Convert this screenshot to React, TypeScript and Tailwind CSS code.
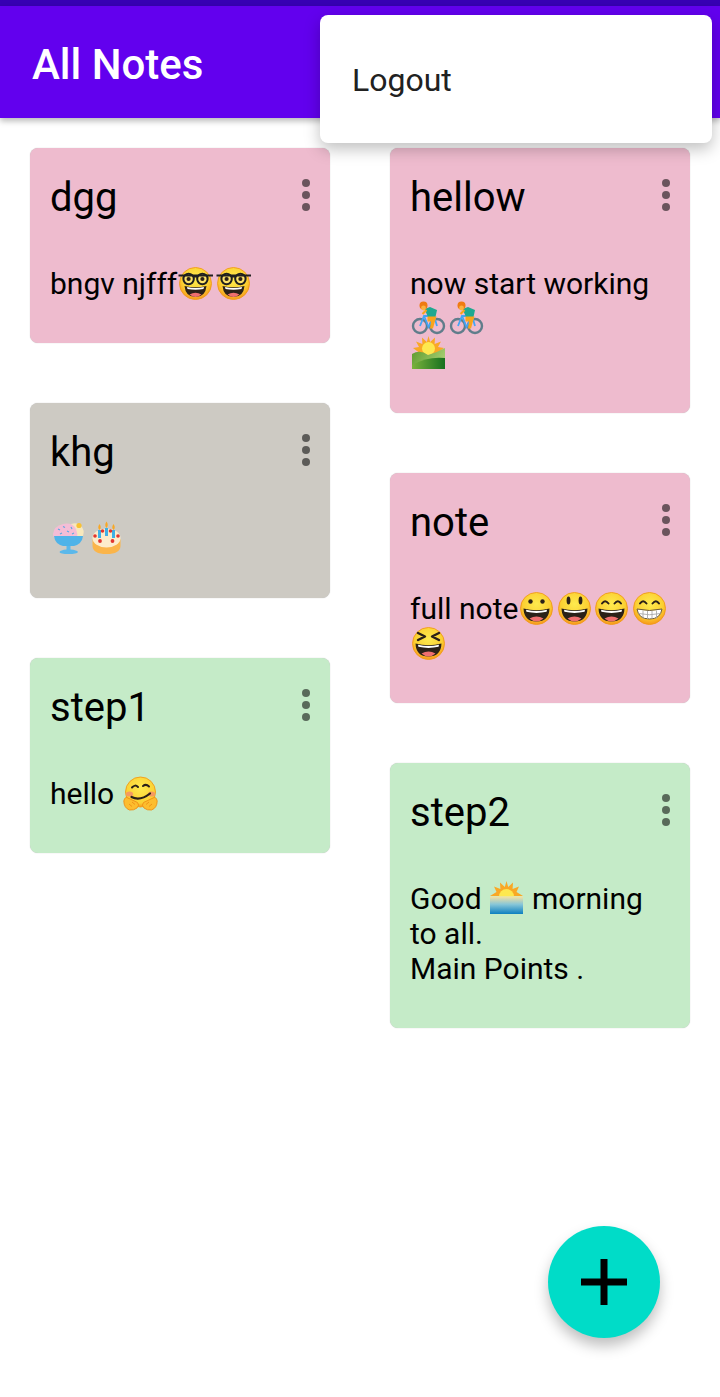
import React from 'react';

const Slot: React.FC<{ label: string; children: React.ReactNode; className?: string }> = ({
  label,
  children,
  className = '',
}) => (
  <svg
    role="img"
    aria-label={label}
    viewBox="0 0 37.5 35"
    className={`inline-block align-top w-[37.5px] h-[35px] ${className}`}
  >
    {children}
  </svg>
);

const Face: React.FC<{ children: React.ReactNode }> = ({ children }) => (
  <>
    <defs>
      <radialGradient id="faceFill" cx="50%" cy="36%" r="64%">
        <stop offset="0%" stopColor="#feea4e" />
        <stop offset="66%" stopColor="#fbd032" />
        <stop offset="100%" stopColor="#f7981c" />
      </radialGradient>
    </defs>
    <circle cx="18.5" cy="17.5" r="16" fill="url(#faceFill)" stroke="#f09a18" strokeWidth="0.9" />
    {children}
  </>
);

const OpenMouth = () => (
  <>
    <path d="M5.5 17.5 Q18.5 21 31.5 17.5 Q31 30.5 18.5 30.5 Q6 30.5 5.5 17.5Z" fill="#2b2118" />
    <path d="M8 18.8 Q18.5 21.4 29 18.8 L28.6 20.8 Q18.5 23 8.4 20.8Z" fill="#fff" />
    <path d="M11.5 27.5 Q18.5 23.5 25.5 27.5 Q22 30.5 18.5 30.5 Q15 30.5 11.5 27.5Z" fill="#ef6f6f" />
  </>
);

const ArcEyes = () => (
  <path
    d="M9 12.5 Q12 8 15.5 12.5 M21.5 12.5 Q25 8 28 12.5"
    fill="none"
    stroke="#2b2118"
    strokeWidth="2"
    strokeLinecap="round"
  />
);

const Nerd = () => (
  <Slot label="nerd face">
    <Face>
      <path d="M7.5 20 Q18.5 22.5 29.5 20 Q28.5 31 18.5 31 Q8.5 31 7.5 20Z" fill="#2b2118" />
      <path d="M10 21 Q18.5 23 27 21 L26.5 23 Q18.5 24.6 10.5 23Z" fill="#fff" />
      <path d="M12.5 28.5 Q18.5 25 24.5 28.5 Q21 31 18.5 31 Q16 31 12.5 28.5Z" fill="#ef6f6f" />
      <circle cx="11.6" cy="13" r="5.2" fill="#fde36a" stroke="#1f1f1f" strokeWidth="2" />
      <circle cx="25.4" cy="13" r="5.2" fill="#fde36a" stroke="#1f1f1f" strokeWidth="2" />
      <circle cx="11.6" cy="13" r="2.1" fill="#2b2118" />
      <circle cx="25.4" cy="13" r="2.1" fill="#2b2118" />
      <path d="M1.5 9.5 H36 M16 10.5 H21" stroke="#1f1f1f" strokeWidth="2" fill="none" />
    </Face>
  </Slot>
);

const Grinning = () => (
  <Slot label="grinning face">
    <Face>
      <circle cx="12.5" cy="10.5" r="2.2" fill="#2b2118" />
      <circle cx="24.5" cy="10.5" r="2.2" fill="#2b2118" />
      <OpenMouth />
    </Face>
  </Slot>
);

const Smiley = () => (
  <Slot label="smiling face with open mouth">
    <Face>
      <ellipse cx="12.5" cy="9.5" rx="1.9" ry="4" fill="#2b2118" />
      <ellipse cx="24.5" cy="9.5" rx="1.9" ry="4" fill="#2b2118" />
      <OpenMouth />
    </Face>
  </Slot>
);

const Smile = () => (
  <Slot label="smiling face with smiling eyes">
    <Face>
      <ArcEyes />
      <OpenMouth />
    </Face>
  </Slot>
);

const Beaming = () => (
  <Slot label="beaming face">
    <Face>
      <ArcEyes />
      <path d="M6 18 Q18.5 21 31 18 Q29.5 28 18.5 28 Q7.5 28 6 18Z" fill="#fff" stroke="#6b5a3c" strokeWidth="1" />
      <path
        d="M7.5 22.5 Q18.5 25 29.5 22.5 M12 19.5 V27.5 M16.5 20 V28 M21 20 V28 M25.5 19.5 V27.5"
        fill="none"
        stroke="#a9a9a9"
        strokeWidth="0.9"
      />
    </Face>
  </Slot>
);

const Squint = () => (
  <Slot label="grinning squinting face">
    <Face>
      <path
        d="M8 7 L15 10.5 L8 14 M29 7 L22 10.5 L29 14"
        fill="none"
        stroke="#2b2118"
        strokeWidth="2.4"
        strokeLinecap="round"
        strokeLinejoin="round"
      />
      <OpenMouth />
    </Face>
  </Slot>
);

const Hugging = () => (
  <Slot label="hugging face">
    <defs>
      <radialGradient id="hugFill" cx="50%" cy="36%" r="64%">
        <stop offset="0%" stopColor="#feea4e" />
        <stop offset="80%" stopColor="#fbd032" />
        <stop offset="100%" stopColor="#f7981c" />
      </radialGradient>
    </defs>
    <circle cx="18.5" cy="16" r="15" fill="url(#hugFill)" stroke="#f09a18" strokeWidth="0.9" />
    <ellipse cx="7.5" cy="18" rx="3.6" ry="2.6" fill="#f59a62" />
    <ellipse cx="29.5" cy="18" rx="3.6" ry="2.6" fill="#f59a62" />
    <path d="M10 11.5 Q13 8 16 11" fill="none" stroke="#2b2118" strokeWidth="2" strokeLinecap="round" />
    <path d="M21 10 Q24 7.5 27 10.5" fill="none" stroke="#2b2118" strokeWidth="2" strokeLinecap="round" />
    <path d="M9.5 21 Q18 25.5 28 17.5" fill="none" stroke="#2b2118" strokeWidth="2.2" strokeLinecap="round" />
    <path
      d="M1.8 25 Q3 20 6 22 L15.5 26.5 Q18 29 15 32 Q12 34.5 7.5 34 Q2 32 1.8 25Z"
      fill="#fdbd2e"
      stroke="#ee8f15"
      strokeWidth="0.9"
    />
    <path
      d="M35.2 25 Q34 20 31 22 L21.5 26.5 Q19 29 22 32 Q25 34.5 29.5 34 Q35 32 35.2 25Z"
      fill="#fdbd2e"
      stroke="#ee8f15"
      strokeWidth="0.9"
    />
    <path d="M10 26 L13 28.5 M7 28 L10 30.5 M27 26 L24 28.5 M30 28 L27 30.5" stroke="#ee8f15" strokeWidth="0.9" />
  </Slot>
);

const Biker = () => (
  <Slot label="person biking">
    <circle cx="10" cy="25" r="7" fill="none" stroke="#607d8b" strokeWidth="2.4" />
    <circle cx="27" cy="25" r="7" fill="none" stroke="#607d8b" strokeWidth="2.4" />
    <path d="M10 25 L14 15 H24 L27 25 M14.5 16 L18.5 26 L24 16" fill="none" stroke="#42a5f5" strokeWidth="1.8" />
    <path d="M14.5 8 L20 6 L27 9 L25.5 16 L18 16Z" fill="#1fa890" />
    <path d="M17.5 15.5 H26.5 L24.5 22 L23 27.5 H20 L21 20.5 H17.5Z" fill="#f9a51a" />
    <path d="M12.5 13 L16.5 9" stroke="#f9a51a" strokeWidth="2.2" />
    <circle cx="13.5" cy="4.5" r="4" fill="#ef7b12" />
    <circle cx="13.5" cy="7" r="2.4" fill="#f9b340" />
  </Slot>
);

const SunriseMountains = () => (
  <Slot label="sunrise over mountains">
    <defs>
      <linearGradient id="hillBack" x1="0" y1="0" x2="1" y2="0.4">
        <stop offset="0%" stopColor="#5c9a2c" />
        <stop offset="100%" stopColor="#a3cc70" />
      </linearGradient>
      <linearGradient id="hillFront" x1="0" y1="0" x2="1" y2="0">
        <stop offset="0%" stopColor="#7bb23c" />
        <stop offset="100%" stopColor="#16701f" />
      </linearGradient>
    </defs>
    <path
      d="M18.5 0 L20.2 6 L25 1.5 L24.6 8 L31 5.5 L28 11 L34 12 L26 18 H11 L3 12 L9 11 L6 5.5 L12.4 8 L12 1.5 L16.8 6Z"
      fill="#f9a825"
    />
    <circle cx="18.5" cy="12.5" r="6.5" fill="#fde84f" />
    <path d="M2 18 Q10 13 18 19 Q26 17 35 12 V33 H2Z" fill="url(#hillBack)" />
    <path d="M2 33 V29 Q18 20 35 22 V33Z" fill="url(#hillFront)" />
  </Slot>
);

const SunriseSea = () => (
  <Slot label="sunrise" className="-ml-px -mr-px">
    <defs>
      <linearGradient id="seaFill" x1="0" y1="0" x2="0" y2="1">
        <stop offset="0%" stopColor="#f7e2a0" />
        <stop offset="45%" stopColor="#87c6d8" />
        <stop offset="100%" stopColor="#0c7fc0" />
      </linearGradient>
    </defs>
    <path
      d="M18.5 0 L20.2 6 L25 1.5 L24.6 8 L31 5.5 L28.5 11 L35 15 H2 L8.5 11 L6 5.5 L12.4 8 L12 1.5 L16.8 6Z"
      fill="#f9a825"
    />
    <path d="M11 15.5 A7.5 7.5 0 0 1 26 15.5Z" fill="#fde84f" />
    <rect x="2" y="15.5" width="33" height="17.5" fill="url(#seaFill)" />
  </Slot>
);

const IceCream = () => (
  <Slot label="ice cream">
    <path d="M21 3 Q28 1 31 5 Q35 9 33 15 L24 17Z" fill="#f7e8bd" />
    <circle cx="29" cy="4.5" r="2.6" fill="#f9c232" />
    <path d="M3 13 Q4 5 13 3 Q22 1 26 8 Q28 13 27 17 H5 Q3 16 3 13Z" fill="#f4bdd6" />
    <path
      d="M8 8 l2 1 M13 5.5 l2 1 M10 13 l2 -1 M17 10 l2 1 M21 6 l1 2 M22 13 l2 -1"
      stroke="#5fa8e0"
      strokeWidth="1.2"
    />
    <path d="M4 15 H33 Q32 23 24 25 H13 Q5 23 4 15Z" fill="#4fb3e8" />
    <path d="M16.5 25 H20.5 V28.5 Q27 29 28 31 Q27 33 18.5 33 Q10 33 9.5 31 Q10.5 29 16.5 28.5Z" fill="#5bb8ea" />
  </Slot>
);

const Cake = () => (
  <Slot label="birthday cake">
    <path d="M4.5 18 V25 Q5 33 18.5 33 Q32 33 32.5 25 V18Z" fill="#fbb54a" />
    <ellipse cx="18.5" cy="17" rx="14" ry="9.5" fill="#fdeccb" />
    <rect x="10" y="9" width="3" height="8" fill="#3fb0e6" />
    <rect x="17" y="7" width="3" height="8" fill="#3fb0e6" />
    <rect x="24" y="9" width="3" height="8" fill="#3fb0e6" />
    <path
      d="M11.5 3 Q14 6.5 11.5 9 Q9 6.5 11.5 3Z M18.5 0.5 Q21 4 18.5 7 Q16 4 18.5 0.5Z M25.5 3 Q28 6.5 25.5 9 Q23 6.5 25.5 3Z"
      fill="#f9a825"
    />
    <circle cx="7" cy="15" r="1.8" fill="#e2352f" />
    <circle cx="30" cy="15" r="1.8" fill="#e2352f" />
    <circle cx="14.5" cy="10" r="1.8" fill="#e2352f" />
    <circle cx="22.5" cy="10" r="1.8" fill="#e2352f" />
    <circle cx="12" cy="20" r="1.9" fill="#e2352f" />
    <circle cx="24.5" cy="20" r="1.9" fill="#e2352f" />
  </Slot>
);

type Tone = 'pink' | 'grey' | 'green';

const toneClass: Record<Tone, string> = {
  pink: 'bg-[#eebbce]',
  grey: 'bg-[#cdcac3]',
  green: 'bg-[#c5ebc8]',
};

const NoteCard: React.FC<{ title: string; tone: Tone; height: string; children: React.ReactNode }> = ({
  title,
  tone,
  height,
  children,
}) => (
  <div className={`${toneClass[tone]} ${height} rounded-lg shadow-[0_0_1px_rgba(0,0,0,0.3)] overflow-hidden pl-5 pr-5 pt-[27px]`}>
    <div className="flex items-start justify-between h-[91px]">
      <h2 className="text-[40px] leading-[46px] font-normal text-black">{title}</h2>
      <div className="flex flex-col gap-1 pt-1">
        <span className="block w-2 h-2 rounded-full bg-black/55" />
        <span className="block w-2 h-2 rounded-full bg-black/55" />
        <span className="block w-2 h-2 rounded-full bg-black/55" />
      </div>
    </div>
    <div className="text-[30px] leading-[35px] text-black">{children}</div>
  </div>
);

export default function App() {
  return (
    <div className="relative w-[720px] h-[1397px] bg-white overflow-hidden font-['Roboto',sans-serif]">
      {/* App bar */}
      <div className="h-[6px] bg-[#3700b3]" />
      <header className="h-[112px] bg-[#6200ee] flex items-center pl-8 shadow-[0_3px_6px_rgba(0,0,0,0.28)] relative z-10">
        <h1 className="text-white text-[42px] font-medium leading-none pt-[6px]">All Notes</h1>
      </header>

      {/* Notes */}
      <main className="flex gap-[60px] px-[30px] pt-[30px]">
        <div className="w-[300px] flex flex-col gap-[60px]">
          <NoteCard title="dgg" tone="pink" height="h-[195px]">
            bngv njfff<Nerd /><Nerd />
          </NoteCard>
          <NoteCard title="khg" tone="grey" height="h-[195px]">
            <IceCream /><Cake />
          </NoteCard>
          <NoteCard title="step1" tone="green" height="h-[195px]">
            hello <Hugging />
          </NoteCard>
        </div>
        <div className="w-[300px] flex flex-col gap-[60px]">
          <NoteCard title="hellow" tone="pink" height="h-[265px]">
            now start working <Biker /><Biker />
            <br />
            <SunriseMountains />
          </NoteCard>
          <NoteCard title="note" tone="pink" height="h-[230px]">
            full note<Grinning /><Smiley /><Smile /><Beaming /><Squint />
          </NoteCard>
          <NoteCard title="step2" tone="green" height="h-[265px]">
            Good <SunriseSea /> morning
            <br />
            to all.
            <br />
            Main Points .
          </NoteCard>
        </div>
      </main>

      {/* Overflow menu */}
      <div className="absolute z-20 left-[320px] top-[15px] w-[392px] h-[128px] bg-white rounded-lg shadow-[0_6px_16px_rgba(0,0,0,0.25)] flex items-center pl-8">
        <span className="text-[32px] text-[#212121] leading-none pt-[2px]">Logout</span>
      </div>

      {/* Add note */}
      <button className="absolute z-20 left-[548px] top-[1226px] w-[112px] h-[112px] rounded-full bg-[#00dcc8] shadow-[0_8px_14px_rgba(0,0,0,0.25)] flex items-center justify-center">
        <svg viewBox="0 0 48 48" className="w-[48px] h-[48px]" aria-label="add">
          <path d="M20.5 1 H27.5 V20.5 H47 V27.5 H27.5 V47 H20.5 V27.5 H1 V20.5 H20.5Z" fill="#000" />
        </svg>
      </button>
    </div>
  );
}
